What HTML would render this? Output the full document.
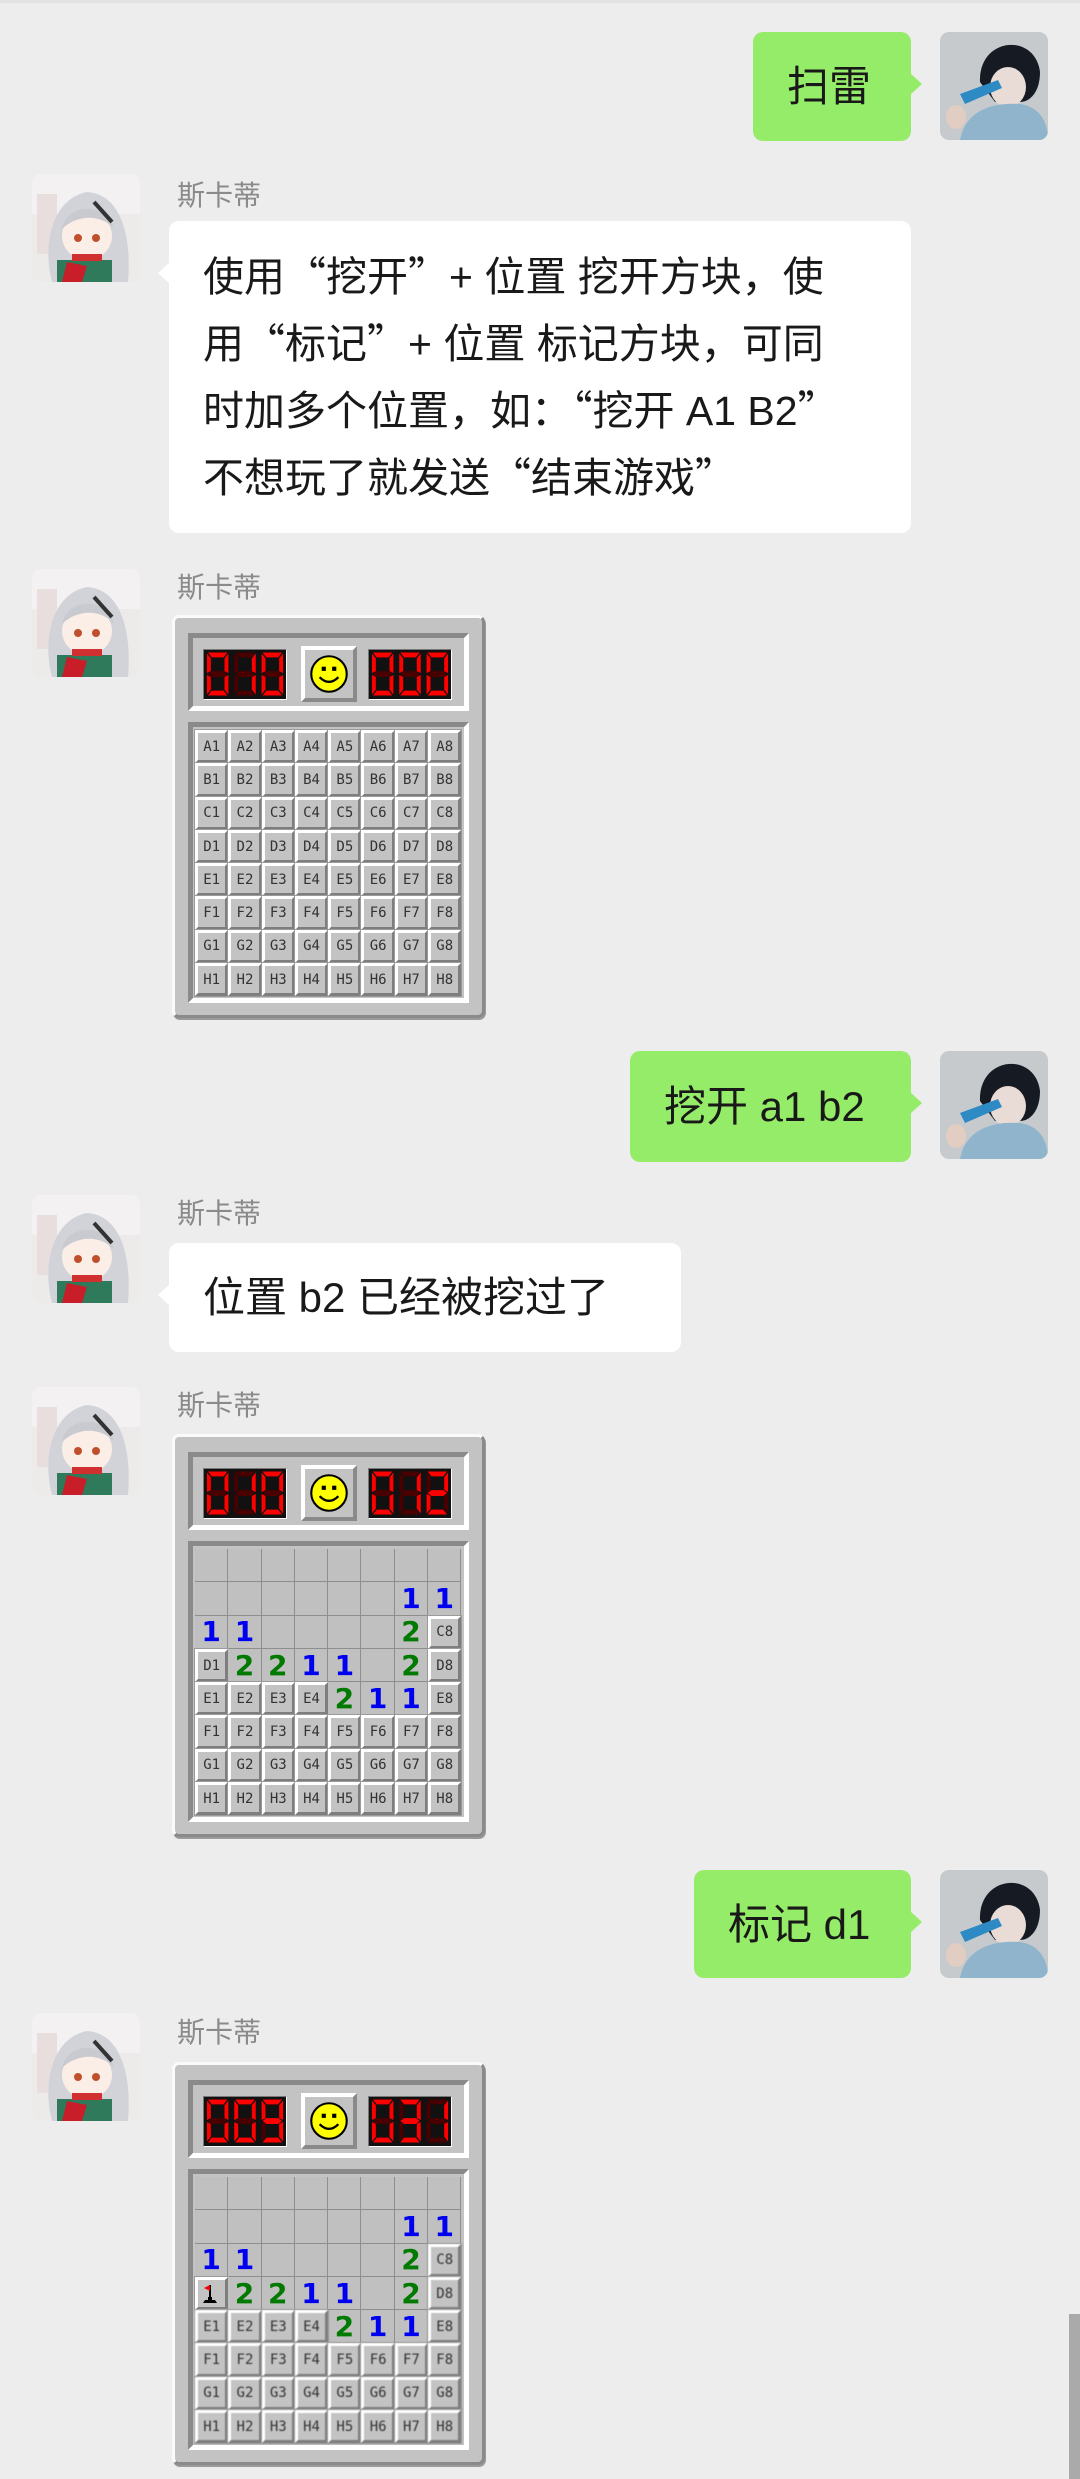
<!DOCTYPE html>
<html><head><meta charset="utf-8"><style>
*{margin:0;padding:0;box-sizing:border-box}
body{width:1080px;height:2479px;background:#ededed;position:relative;overflow:hidden;font-family:"Liberation Sans","Noto Sans CJK SC",sans-serif;color:#191919}
.top{position:absolute;left:0;top:0;width:1080px;height:3px;background:#e2e2e2}
.av{position:absolute;width:108px;height:108px;border-radius:9px;overflow:hidden}
.name{position:absolute;left:177px;font-size:28px;color:#8a8a8a;line-height:34px}
.b{position:absolute;border-radius:10px;font-size:42px;line-height:63px;padding:23px 34px;white-space:nowrap}
.w{background:#fff}
.g{background:#95ec69}
.b:after{content:"";position:absolute;top:41px;width:0;height:0;border-top:11px solid transparent;border-bottom:11px solid transparent}
.w:after{left:-11px;border-right:12px solid #fff}
.g:after{right:-11px;border-left:12px solid #95ec69}
.q{font-family:"Noto Sans CJK SC",sans-serif}
.scroll{position:absolute;left:1069px;top:2314px;width:11px;height:165px;background:#aaa}
.board{position:absolute;left:172px;width:313px;height:403px;background:#c3c3c3;border:3px solid;border-color:#fafafa #8a8a8a #8a8a8a #fafafa;border-radius:7px;box-shadow:1px 2px 0 #9a9a9a}
.hd{position:absolute;left:13px;top:15px;width:281px;height:78px;border:5px solid;border-color:#8a8a8a #fff #fff #8a8a8a}
.lcd{position:absolute;top:11px;width:84px;height:51px;background:#111;border:1px solid;border-color:#777 #fff #fff #777}
.l1{left:10px}.l2{left:175px}
.sm{position:absolute;left:108px;top:8px;width:56px;height:56px;background:#c3c3c3;border:4px solid;border-color:#fff #8a8a8a #8a8a8a #fff}
.gp{position:absolute;left:13px;top:104px;width:281px;height:281px;border:5px solid;border-color:#8a8a8a #fff #fff #8a8a8a;background:#c3c3c3}
.gr{position:absolute;left:2px;top:3px;display:grid;grid-template-columns:repeat(8,33.3px);grid-template-rows:repeat(8,33.3px)}
.gr div{font-family:"DejaVu Sans Mono","Liberation Mono",monospace;display:flex;align-items:center;justify-content:center}
.c{background:#c3c3c3;border:3px solid;border-color:#fff #7e7e7e #7e7e7e #fff;font-size:14px;color:#333;outline:1px solid #9a9a9a}
.o{background:#c0c0c0;border-right:1px solid #8e8e8e;border-bottom:1px solid #8e8e8e;font-family:"DejaVu Sans","Liberation Sans",sans-serif!important;font-weight:bold;font-size:28px}
.n1{color:#0000f0}.n2{color:#007a00}
.bl{filter:blur(0.6px)}
</style></head><body>
<div class="top"></div>
<svg width="0" height="0" style="position:absolute"><defs>
<polygon id="a" points="3,1 23,1 19,6 7,6"/>
<polygon id="b" points="24,2 24,22 20,20 20,7"/>
<polygon id="c" points="24,24 24,44 20,39 20,26"/>
<polygon id="d" points="3,45 23,45 19,40 7,40"/>
<polygon id="e" points="2,24 6,26 6,39 2,44"/>
<polygon id="f" points="2,2 6,7 6,20 2,22"/>
<polygon id="gg" points="3,23 7,20 19,20 23,23 19,26 7,26"/>
<g id="all" fill="#4a0000"><use href="#a"/><use href="#b"/><use href="#c"/><use href="#d"/><use href="#e"/><use href="#f"/><use href="#gg"/></g>
<g id="d0"><use href="#all"/><g fill="#f00"><use href="#a"/><use href="#b"/><use href="#c"/><use href="#d"/><use href="#e"/><use href="#f"/></g></g>
<g id="d1"><use href="#all"/><g fill="#f00"><use href="#b"/><use href="#c"/></g></g>
<g id="d2"><use href="#all"/><g fill="#f00"><use href="#a"/><use href="#b"/><use href="#gg"/><use href="#e"/><use href="#d"/></g></g>
<g id="d3"><use href="#all"/><g fill="#f00"><use href="#a"/><use href="#b"/><use href="#gg"/><use href="#c"/><use href="#d"/></g></g>
<g id="d9"><use href="#all"/><g fill="#f00"><use href="#a"/><use href="#b"/><use href="#c"/><use href="#d"/><use href="#f"/><use href="#gg"/></g></g>
<g id="smile"><circle cx="23" cy="23" r="17" fill="#ff0" stroke="#000" stroke-width="2"/><rect x="16" y="16" width="4" height="4"/><rect x="26" y="16" width="4" height="4"/><path d="M14 26 Q23 35 32 26" fill="none" stroke="#000" stroke-width="2.2"/></g>
<g id="avL"><rect width="108" height="108" fill="#ecebea"/><rect x="0" y="0" width="108" height="40" fill="#f3f1f1"/><rect x="5" y="20" width="20" height="60" fill="#e8dede"/><path d="M20 108 C10 70 20 25 55 18 C88 20 100 60 96 108 Z" fill="#d2d3d8"/><ellipse cx="55" cy="62" rx="25" ry="24" fill="#fbeee6"/><path d="M30 55 C35 28 75 28 82 55 C70 40 45 40 30 55Z" fill="#c9cad0"/><circle cx="46" cy="64" r="4" fill="#c0502d"/><circle cx="64" cy="64" r="4" fill="#c0502d"/><path d="M62 28 L80 48" stroke="#333" stroke-width="4"/><rect x="25" y="86" width="55" height="22" fill="#2e7a5a"/><path d="M30 108 L35 88 L55 92 L50 108Z" fill="#c81e2a"/><rect x="40" y="80" width="30" height="7" fill="#d03030"/></g>
<g id="avR"><rect width="108" height="108" fill="#c6cacd"/><path d="M40 50 C38 5 95 0 100 40 C100 60 90 70 80 70 L55 70 Z" fill="#161a22"/><ellipse cx="68" cy="55" rx="18" ry="20" fill="#e9dcd6"/><path d="M20 108 C25 80 50 70 80 72 C100 75 108 90 108 108Z" fill="#8fb4cc"/><path d="M20 62 L58 48 L62 56 L25 72Z" fill="#2d8ac4"/><ellipse cx="16" cy="85" rx="10" ry="12" fill="#e2cdc3"/></g>
</defs></svg>

<div class="b g" style="left:753px;top:32px;width:158px;height:109px">扫雷</div>
<svg class="av" style="left:940px;top:32px" viewBox="0 0 108 108"><use href="#avR"/></svg>

<svg class="av" style="left:32px;top:174px" viewBox="0 0 108 108"><use href="#avL"/></svg>
<div class="name" style="top:179px">斯卡蒂</div>
<div class="b w" style="left:169px;top:221px;width:742px;height:312px;padding:21px 20px 0 34px;font-size:41px">使用<span class="q">“</span>挖开<span class="q">”</span>+ 位置 挖开方块，使<br>用<span class="q">“</span>标记<span class="q">”</span>+ 位置 标记方块，可同<br>时加多个位置，如：<span class="q">“</span>挖开 A1 B2<span class="q">”</span><br>不想玩了就发送<span class="q">“</span>结束游戏<span class="q">”</span></div>

<svg class="av" style="left:32px;top:569px" viewBox="0 0 108 108"><use href="#avL"/></svg>
<div class="name" style="top:571px">斯卡蒂</div>
<div class="board" style="top:615px">
 <div class="hd">
  <svg class="lcd l1" viewBox="0 0 84 49"><use href="#d0" x="1" y="1"/><use href="#d1" x="29" y="1"/><use href="#d0" x="57" y="1"/></svg>
  <svg class="sm" viewBox="0 0 46 46"><use href="#smile"/></svg>
  <svg class="lcd l2" viewBox="0 0 84 49"><use href="#d0" x="1" y="1"/><use href="#d0" x="29" y="1"/><use href="#d0" x="57" y="1"/></svg>
 </div>
 <div class="gp"><div class="gr">
<div class="c">A1</div><div class="c">A2</div><div class="c">A3</div><div class="c">A4</div><div class="c">A5</div><div class="c">A6</div><div class="c">A7</div><div class="c">A8</div>
<div class="c">B1</div><div class="c">B2</div><div class="c">B3</div><div class="c">B4</div><div class="c">B5</div><div class="c">B6</div><div class="c">B7</div><div class="c">B8</div>
<div class="c">C1</div><div class="c">C2</div><div class="c">C3</div><div class="c">C4</div><div class="c">C5</div><div class="c">C6</div><div class="c">C7</div><div class="c">C8</div>
<div class="c">D1</div><div class="c">D2</div><div class="c">D3</div><div class="c">D4</div><div class="c">D5</div><div class="c">D6</div><div class="c">D7</div><div class="c">D8</div>
<div class="c">E1</div><div class="c">E2</div><div class="c">E3</div><div class="c">E4</div><div class="c">E5</div><div class="c">E6</div><div class="c">E7</div><div class="c">E8</div>
<div class="c">F1</div><div class="c">F2</div><div class="c">F3</div><div class="c">F4</div><div class="c">F5</div><div class="c">F6</div><div class="c">F7</div><div class="c">F8</div>
<div class="c">G1</div><div class="c">G2</div><div class="c">G3</div><div class="c">G4</div><div class="c">G5</div><div class="c">G6</div><div class="c">G7</div><div class="c">G8</div>
<div class="c">H1</div><div class="c">H2</div><div class="c">H3</div><div class="c">H4</div><div class="c">H5</div><div class="c">H6</div><div class="c">H7</div><div class="c">H8</div>
 </div></div>
</div>

<div class="b g" style="left:630px;top:1051px;width:281px;height:111px;padding-top:24px">挖开 a1 b2</div>
<svg class="av" style="left:940px;top:1051px" viewBox="0 0 108 108"><use href="#avR"/></svg>

<svg class="av" style="left:32px;top:1195px" viewBox="0 0 108 108"><use href="#avL"/></svg>
<div class="name" style="top:1197px">斯卡蒂</div>
<div class="b w" style="left:169px;top:1243px;width:512px;height:109px">位置 b2 已经被挖过了</div>

<svg class="av" style="left:32px;top:1387px" viewBox="0 0 108 108"><use href="#avL"/></svg>
<div class="name" style="top:1389px">斯卡蒂</div>
<div class="board" style="top:1434px">
 <div class="hd">
  <svg class="lcd l1" viewBox="0 0 84 49"><use href="#d0" x="1" y="1"/><use href="#d1" x="29" y="1"/><use href="#d0" x="57" y="1"/></svg>
  <svg class="sm" viewBox="0 0 46 46"><use href="#smile"/></svg>
  <svg class="lcd l2" viewBox="0 0 84 49"><use href="#d0" x="1" y="1"/><use href="#d1" x="29" y="1"/><use href="#d2" x="57" y="1"/></svg>
 </div>
 <div class="gp"><div class="gr">
<div class="o"></div><div class="o"></div><div class="o"></div><div class="o"></div><div class="o"></div><div class="o"></div><div class="o"></div><div class="o"></div>
<div class="o"></div><div class="o"></div><div class="o"></div><div class="o"></div><div class="o"></div><div class="o"></div><div class="o n1">1</div><div class="o n1">1</div>
<div class="o n1">1</div><div class="o n1">1</div><div class="o"></div><div class="o"></div><div class="o"></div><div class="o"></div><div class="o n2">2</div><div class="c">C8</div>
<div class="c">D1</div><div class="o n2">2</div><div class="o n2">2</div><div class="o n1">1</div><div class="o n1">1</div><div class="o"></div><div class="o n2">2</div><div class="c">D8</div>
<div class="c">E1</div><div class="c">E2</div><div class="c">E3</div><div class="c">E4</div><div class="o n2">2</div><div class="o n1">1</div><div class="o n1">1</div><div class="c">E8</div>
<div class="c">F1</div><div class="c">F2</div><div class="c">F3</div><div class="c">F4</div><div class="c">F5</div><div class="c">F6</div><div class="c">F7</div><div class="c">F8</div>
<div class="c">G1</div><div class="c">G2</div><div class="c">G3</div><div class="c">G4</div><div class="c">G5</div><div class="c">G6</div><div class="c">G7</div><div class="c">G8</div>
<div class="c">H1</div><div class="c">H2</div><div class="c">H3</div><div class="c">H4</div><div class="c">H5</div><div class="c">H6</div><div class="c">H7</div><div class="c">H8</div>
 </div></div>
</div>

<div class="b g" style="left:694px;top:1870px;width:217px;height:108px">标记 d1</div>
<svg class="av" style="left:940px;top:1870px" viewBox="0 0 108 108"><use href="#avR"/></svg>

<svg class="av" style="left:32px;top:2013px" viewBox="0 0 108 108"><use href="#avL"/></svg>
<div class="name" style="top:2016px">斯卡蒂</div>
<div class="board" style="top:2062px">
 <div class="hd">
  <svg class="lcd l1" viewBox="0 0 84 49"><use href="#d0" x="1" y="1"/><use href="#d0" x="29" y="1"/><use href="#d9" x="57" y="1"/></svg>
  <svg class="sm" viewBox="0 0 46 46"><use href="#smile"/></svg>
  <svg class="lcd l2" viewBox="0 0 84 49"><use href="#d0" x="1" y="1"/><use href="#d3" x="29" y="1"/><use href="#d1" x="57" y="1"/></svg>
 </div>
 <div class="gp"><div class="gr">
<div class="o"></div><div class="o"></div><div class="o"></div><div class="o"></div><div class="o"></div><div class="o"></div><div class="o"></div><div class="o"></div>
<div class="o"></div><div class="o"></div><div class="o"></div><div class="o"></div><div class="o"></div><div class="o"></div><div class="o n1">1</div><div class="o n1">1</div>
<div class="o n1">1</div><div class="o n1">1</div><div class="o"></div><div class="o"></div><div class="o"></div><div class="o"></div><div class="o n2">2</div><div class="c bl">C8</div>
<div class="c"><svg width="22" height="22" viewBox="0 0 22 22"><path d="M9 2 L9 14" stroke="#000" stroke-width="2"/><path d="M9 2 L3 5 L9 8Z" fill="#e00"/><path d="M4 17 L14 17 L16 20 L2 20Z" fill="#000"/><rect x="7" y="14" width="4" height="3"/></svg></div><div class="o n2">2</div><div class="o n2">2</div><div class="o n1">1</div><div class="o n1">1</div><div class="o"></div><div class="o n2">2</div><div class="c bl">D8</div>
<div class="c bl">E1</div><div class="c bl">E2</div><div class="c bl">E3</div><div class="c bl">E4</div><div class="o n2">2</div><div class="o n1">1</div><div class="o n1">1</div><div class="c bl">E8</div>
<div class="c bl">F1</div><div class="c bl">F2</div><div class="c bl">F3</div><div class="c bl">F4</div><div class="c bl">F5</div><div class="c bl">F6</div><div class="c bl">F7</div><div class="c bl">F8</div>
<div class="c bl">G1</div><div class="c bl">G2</div><div class="c bl">G3</div><div class="c bl">G4</div><div class="c bl">G5</div><div class="c bl">G6</div><div class="c bl">G7</div><div class="c bl">G8</div>
<div class="c bl">H1</div><div class="c bl">H2</div><div class="c bl">H3</div><div class="c bl">H4</div><div class="c bl">H5</div><div class="c bl">H6</div><div class="c bl">H7</div><div class="c bl">H8</div>
 </div></div>
</div>

<div class="scroll"></div>
</body></html>
